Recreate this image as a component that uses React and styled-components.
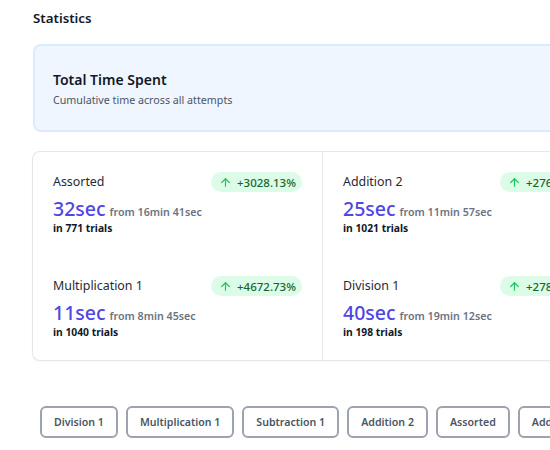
import React from 'react'
import styled, { createGlobalStyle } from 'styled-components'
import { ArrowUp } from 'lucide-react'

const GlobalStyle = createGlobalStyle`
  body {
    margin: 0;
    background: #ffffff;
    font-family: 'Noto Sans', 'Open Sans', sans-serif;
    color: #111827;
    overflow: hidden;
  }
`

const Page = styled.div`
  width: 600px;
  padding: 9px 0 0 32px;
`

const Heading = styled.h2`
  margin: 0 0 17px 1px;
  font-size: 13.3px;
  font-weight: 600;
  line-height: 18px;
`

const SummaryCard = styled.section`
  box-sizing: border-box;
  height: 88px;
  margin-left: 1px;
  padding: 24px 19px 0 18px;
  background: #eff6ff;
  border: 2px solid #dbeafe;
  border-radius: 8px;
`

const SummaryTitle = styled.h3`
  margin: 0;
  font-size: 14px;
  font-weight: 600;
  line-height: 20px;
`

const SummaryText = styled.p`
  margin: 3px 0 0 0;
  font-size: 10.7px;
  line-height: 14px;
  color: #4b5563;
`

const Grid = styled.div`
  margin-top: 19px;
  display: grid;
  grid-template-columns: 289px 289px;
  border: 1px solid #e5e7eb;
  border-right: none;
  border-radius: 8px 0 0 8px;
  box-shadow: 0 1px 2px rgba(0, 0, 0, 0.04);
`

const Cell = styled.div`
  box-sizing: border-box;
  height: 104px;
  padding: 20px 20px 0 20px;
  border-left: ${p => (p.$divided ? '1px solid #e5e7eb' : 'none')};
`

const CellHeader = styled.div`
  display: flex;
  justify-content: space-between;
  align-items: center;
`

const Label = styled.span`
  font-size: 12.4px;
  line-height: 20px;
  color: #1f2937;
`

const Badge = styled.span`
  display: inline-flex;
  align-items: center;
  gap: 5px;
  height: 20px;
  padding: 0 6px 0 8px;
  border-radius: 10px;
  background: #dcfce7;
  color: #166534;
  font-size: 11.5px;
  font-weight: 500;
`

const ValueLine = styled.div`
  display: flex;
  align-items: baseline;
  gap: 4px;
  margin-top: 5px;
`

const Value = styled.span`
  font-size: 19.5px;
  font-weight: 500;
  line-height: 24px;
  color: #4f46e5;
`

const From = styled.span`
  font-size: 10.7px;
  font-weight: 600;
  color: #6b7280;
`

const Trials = styled.div`
  font-size: 10.3px;
  font-weight: 700;
  line-height: 14px;
  color: #111827;
`

const ButtonRow = styled.div`
  display: flex;
  gap: 8px;
  margin: 45px 0 0 8px;
`

const FilterButton = styled.button`
  flex: none;
  height: 32px;
  padding: 0 12px;
  background: #ffffff;
  border: 2px solid #9ca3af;
  border-radius: 6px;
  font-family: inherit;
  font-size: 10.6px;
  font-weight: 600;
  color: #4b5563;
`

const stats = [
  { name: 'Assorted', value: '32sec', from: '16min 41sec', trials: 771, change: '+3028.13%' },
  { name: 'Addition 2', value: '25sec', from: '11min 57sec', trials: 1021, change: '+2768.00%' },
  { name: 'Multiplication 1', value: '11sec', from: '8min 45sec', trials: 1040, change: '+4672.73%' },
  { name: 'Division 1', value: '40sec', from: '19min 12sec', trials: 198, change: '+2780.00%' },
]

const filters = ['Division 1', 'Multiplication 1', 'Subtraction 1', 'Addition 2', 'Assorted', 'Addition 1']

function StatCell({ stat, divided }) {
  return (
    <Cell $divided={divided}>
      <CellHeader>
        <Label>{stat.name}</Label>
        <Badge>
          <ArrowUp size={13} color="#22c55e" strokeWidth={2.2} />
          {stat.change}
        </Badge>
      </CellHeader>
      <ValueLine>
        <Value>{stat.value}</Value>
        <From>from {stat.from}</From>
      </ValueLine>
      <Trials>in {stat.trials} trials</Trials>
    </Cell>
  )
}

export default function App() {
  return (
    <>
      <GlobalStyle />
      <Page>
        <Heading>Statistics</Heading>
        <SummaryCard>
          <SummaryTitle>Total Time Spent</SummaryTitle>
          <SummaryText>Cumulative time across all attempts</SummaryText>
        </SummaryCard>
        <Grid>
          {stats.map((s, i) => (
            <StatCell key={s.name} stat={s} divided={i % 2 === 1} />
          ))}
        </Grid>
        <ButtonRow>
          {filters.map(f => (
            <FilterButton key={f}>{f}</FilterButton>
          ))}
        </ButtonRow>
      </Page>
    </>
  )
}
